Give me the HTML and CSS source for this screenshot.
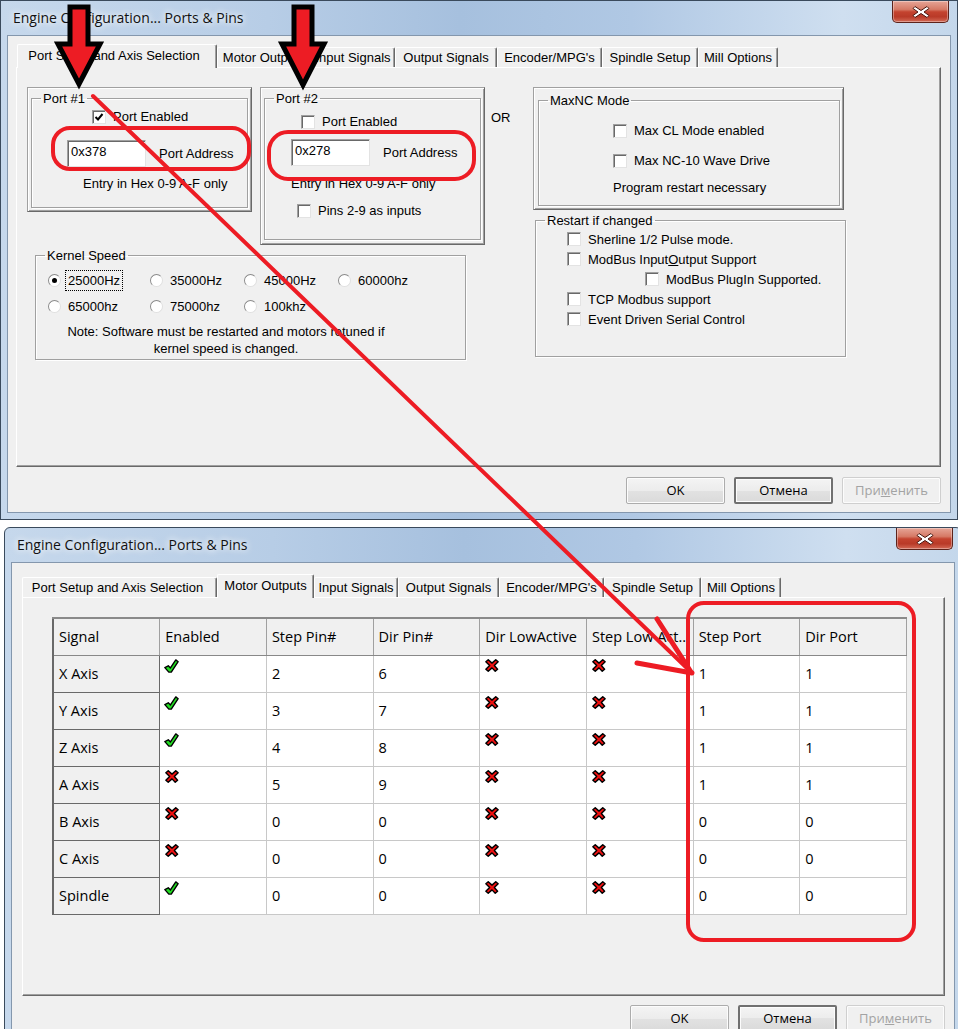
FILE: index.html
```html
<!DOCTYPE html>
<html>
<head>
<meta charset="utf-8">
<title>Engine Configuration</title>
<link rel="stylesheet" href="styles.css">
</head>
<body>
<svg class="defs" width="0" height="0" aria-hidden="true">
  <defs>
    <symbol id="ok" viewBox="0 0 14 13">
      <polygon points="0.8,8 4,6.3 6,8.3 11,0.8 13.2,2.5 6.8,12.2 4.5,12.2" fill="#22dd22" stroke="#000" stroke-width="1.3" stroke-linejoin="round"/>
    </symbol>
    <symbol id="no" viewBox="0 0 13 12">
      <polygon points="0.8,2.5 3,0.6 6.5,3.8 10,0.6 12.2,2.5 8.7,6 11.7,9.5 9.5,11.4 6.5,8.2 3,11.4 0.8,9.5 4.3,6" fill="#ee1111" stroke="#000" stroke-width="1.3" stroke-linejoin="round"/>
    </symbol>
    <symbol id="x" viewBox="0 0 18 14">
      <path d="M3 1.5 L9 5.5 L15 1.5 L17 3.5 L12 7 L17 10.5 L15 12.5 L9 8.5 L3 12.5 L1 10.5 L6 7 L1 3.5 Z" fill="#fff" stroke="#4a1810" stroke-width="1" stroke-linejoin="round"/>
    </symbol>
  </defs>
</svg>
<div class="desk">
  <section class="win win-a">
    <header class="titlebar">
      <span class="title">Engine Configuration... Ports &amp; Pins</span>
      <span class="close"><svg width="18" height="14"><use href="#x"/></svg></span>
    </header>
    <div class="client">
      <nav class="tabs tabs-a">
        <span class="tab sel t-port">Port Setup and Axis Selection</span>
        <span class="tab t-motor">Motor Outputs</span>
        <span class="tab t-input">Input Signals</span>
        <span class="tab t-output">Output Signals</span>
        <span class="tab t-enc">Encoder/MPG's</span>
        <span class="tab t-spin">Spindle Setup</span>
        <span class="tab t-mill">Mill Options</span>
      </nav>
      <div class="panel setup">
        <div class="col-left">
          <div class="ports">
            <div class="frame f-port1">
              <fieldset class="grp">
                <legend>Port #1</legend>
                <div class="ck p1-en"><span class="cb"><svg width="12" height="12" viewBox="0 0 12 12"><path d="M2.5 6 L5 8.5 L9.5 3" fill="none" stroke="#000" stroke-width="2"/></svg></span><span class="lbl">Port Enabled</span></div>
                <div class="addr p1-addr"><span class="edit">0x378</span><span class="addr-lbl">Port Address</span></div>
                <div class="hint p1-hint">Entry in Hex 0-9 A-F only</div>
              </fieldset>
            </div>
            <div class="frame f-port2">
              <fieldset class="grp">
                <legend>Port #2</legend>
                <div class="ck p2-en"><span class="cb"></span><span class="lbl">Port Enabled</span></div>
                <div class="addr p2-addr"><span class="edit">0x278</span><span class="addr-lbl">Port Address</span></div>
                <div class="hint p2-hint">Entry in Hex 0-9 A-F only</div>
                <div class="ck p2-pins"><span class="cb"></span><span class="lbl">Pins 2-9 as inputs</span></div>
              </fieldset>
            </div>
          </div>
          <fieldset class="grp kernel">
            <legend>Kernel Speed</legend>
            <div class="radios">
              <div class="ri"><span class="rb on"></span><span class="rl focus">25000Hz</span></div>
              <div class="ri"><span class="rb"></span><span class="rl">35000Hz</span></div>
              <div class="ri"><span class="rb"></span><span class="rl">45000Hz</span></div>
              <div class="ri"><span class="rb"></span><span class="rl">60000hz</span></div>
              <div class="ri"><span class="rb"></span><span class="rl">65000hz</span></div>
              <div class="ri"><span class="rb"></span><span class="rl">75000hz</span></div>
              <div class="ri"><span class="rb"></span><span class="rl">100khz</span></div>
            </div>
            <p class="note">Note: Software must be restarted and motors retuned if<br>kernel speed is changed.</p>
          </fieldset>
        </div>
        <div class="or">OR</div>
        <div class="col-right">
          <div class="frame f-maxnc">
            <fieldset class="grp">
              <legend>MaxNC Mode</legend>
              <div class="ck m-1"><span class="cb"></span><span class="lbl">Max CL Mode enabled</span></div>
              <div class="ck m-2"><span class="cb"></span><span class="lbl">Max NC-10 Wave Drive</span></div>
              <div class="hint m-hint">Program restart necessary</div>
            </fieldset>
          </div>
          <fieldset class="grp restart">
            <legend>Restart if changed</legend>
            <div class="ck rs"><span class="cb"></span><span class="lbl">Sherline 1/2 Pulse mode.</span></div>
            <div class="ck rs"><span class="cb"></span><span class="lbl">ModBus Input<u>O</u>utput Support</span></div>
            <div class="ck rs rs-sub"><span class="cb"></span><span class="lbl">ModBus PlugIn Supported.</span></div>
            <div class="ck rs"><span class="cb"></span><span class="lbl">TCP Modbus support</span></div>
            <div class="ck rs"><span class="cb"></span><span class="lbl">Event Driven Serial Control</span></div>
          </fieldset>
        </div>
      </div>
      <div class="btns">
        <span class="btn">OK</span>
        <span class="btn def">Отмена</span>
        <span class="btn dis">При<u>м</u>енить</span>
      </div>
    </div>
  </section>

  <section class="win win-b">
    <header class="titlebar">
      <span class="title">Engine Configuration... Ports &amp; Pins</span>
      <span class="close"><svg width="18" height="14"><use href="#x"/></svg></span>
    </header>
    <div class="client">
      <nav class="tabs tabs-b">
        <span class="tab t-port">Port Setup and Axis Selection</span>
        <span class="tab sel t-motor">Motor Outputs</span>
        <span class="tab t-input">Input Signals</span>
        <span class="tab t-output">Output Signals</span>
        <span class="tab t-enc">Encoder/MPG's</span>
        <span class="tab t-spin">Spindle Setup</span>
        <span class="tab t-mill">Mill Options</span>
      </nav>
      <div class="panel outputs">
        <table class="grid">
          <thead>
            <tr><th>Signal</th><th>Enabled</th><th>Step Pin#</th><th>Dir Pin#</th><th>Dir LowActive</th><th>Step Low Act..</th><th>Step Port</th><th>Dir Port</th></tr>
          </thead>
          <tbody>
            <tr><td class="rh">X Axis</td><td class="ic"><svg class="i-ok"><use href="#ok"/></svg></td><td>2</td><td>6</td><td class="ic"><svg class="i-no"><use href="#no"/></svg></td><td class="ic"><svg class="i-no"><use href="#no"/></svg></td><td>1</td><td>1</td></tr>
            <tr><td class="rh">Y Axis</td><td class="ic"><svg class="i-ok"><use href="#ok"/></svg></td><td>3</td><td>7</td><td class="ic"><svg class="i-no"><use href="#no"/></svg></td><td class="ic"><svg class="i-no"><use href="#no"/></svg></td><td>1</td><td>1</td></tr>
            <tr><td class="rh">Z Axis</td><td class="ic"><svg class="i-ok"><use href="#ok"/></svg></td><td>4</td><td>8</td><td class="ic"><svg class="i-no"><use href="#no"/></svg></td><td class="ic"><svg class="i-no"><use href="#no"/></svg></td><td>1</td><td>1</td></tr>
            <tr><td class="rh">A Axis</td><td class="ic"><svg class="i-no"><use href="#no"/></svg></td><td>5</td><td>9</td><td class="ic"><svg class="i-no"><use href="#no"/></svg></td><td class="ic"><svg class="i-no"><use href="#no"/></svg></td><td>1</td><td>1</td></tr>
            <tr><td class="rh">B Axis</td><td class="ic"><svg class="i-no"><use href="#no"/></svg></td><td>0</td><td>0</td><td class="ic"><svg class="i-no"><use href="#no"/></svg></td><td class="ic"><svg class="i-no"><use href="#no"/></svg></td><td>0</td><td>0</td></tr>
            <tr><td class="rh">C Axis</td><td class="ic"><svg class="i-no"><use href="#no"/></svg></td><td>0</td><td>0</td><td class="ic"><svg class="i-no"><use href="#no"/></svg></td><td class="ic"><svg class="i-no"><use href="#no"/></svg></td><td>0</td><td>0</td></tr>
            <tr><td class="rh">Spindle</td><td class="ic"><svg class="i-ok"><use href="#ok"/></svg></td><td>0</td><td>0</td><td class="ic"><svg class="i-no"><use href="#no"/></svg></td><td class="ic"><svg class="i-no"><use href="#no"/></svg></td><td>0</td><td>0</td></tr>
          </tbody>
        </table>
      </div>
      <div class="btns">
        <span class="btn">OK</span>
        <span class="btn def">Отмена</span>
        <span class="btn dis">При<u>м</u>енить</span>
      </div>
    </div>
  </section>

  <svg class="annot" width="958" height="1029" viewBox="0 0 958 1029">
    <g fill="none" stroke="#ed1c24" stroke-width="4" stroke-linecap="round">
      <rect x="53" y="128" width="196" height="41" rx="17"/>
      <rect x="269" y="132" width="205" height="47" rx="19"/>
      <rect x="688" y="603" width="226" height="337" rx="16"/>
      <path d="M93 96 L691 672"/>
      <path d="M657 619 L691 672 M637 663 L692 673" stroke-width="5"/>
    </g>
    <g fill="#ed1c24" stroke="#000" stroke-width="5" stroke-linejoin="miter">
      <polygon points="70,7 88,7 88,44 100,44 79,84 58,44 70,44"/>
      <polygon points="294,7 312,7 312,44 324,44 303,85 282,44 294,44"/>
    </g>
  </svg>
</div>
</body>
</html>
```

FILE: styles.css
```css
* { box-sizing: border-box; }
html, body { margin: 0; padding: 0; overflow: hidden; background: #fff; }
body {
  font-family: "Liberation Sans", Arial, sans-serif;
  font-size: 13px;
  line-height: 15px;
  color: #000;
}
.defs { position: absolute; width: 0; height: 0; overflow: hidden; }
.desk { position: relative; width: 958px; height: 1029px; overflow: hidden; }

/* ---------- window frame ---------- */
.win {
  display: flex;
  flex-direction: column;
  width: 958px;
  border: 1px solid #3a4a5c;
  border-radius: 6px 6px 0 0;
  padding: 0 6px 6px;
  background: linear-gradient(90deg, #c6d8ec 0%, #b7cde6 28%, #a6c0de 48%, #b0c8e4 66%, #cfdff0 88%, #c4d7eb 100%);
}
.win-a { height: 520px; border-radius: 0; }
.win-b { height: 540px; margin: 7px 0 0 4px; }
.titlebar {
  height: 34px;
  flex: none;
  display: flex;
  justify-content: space-between;
  align-items: flex-start;
}
.title {
  font-family: "Open Sans", "Noto Sans", sans-serif;
  font-size: 14px;
  line-height: 34px;
  padding-left: 6px;
  color: #111;
  text-shadow: 0 0 6px #fff, 0 0 10px rgba(255,255,255,.8);
}
.close {
  width: 57px;
  height: 22px;
  margin-right: 2px;
  border: 1px solid #5d231b;
  border-top: none;
  border-radius: 0 0 5px 5px;
  background: linear-gradient(#e6a597 0%, #d67a66 40%, #c4432f 52%, #b93a28 75%, #d36a56 100%);
  box-shadow: inset 0 0 0 1px rgba(255,255,255,.35);
  display: flex;
  align-items: center;
  justify-content: center;
}
.client {
  flex: 1;
  border: 1px solid #8497ad;
  background: #f0f0f0;
}
.win-a .client { padding: 8px 9px 0 8px; }
.win-b .client { padding: 11px 9px 0 10px; }

/* ---------- tabs ---------- */
.tabs { display: flex; align-items: flex-end; height: 23px; }
.tabs-a { padding-left: 1px; }
.tab {
  height: 20px;
  display: flex;
  align-items: center;
  justify-content: center;
  white-space: nowrap;
  background: #f0f0f0;
  border-top: 1px solid #fff;
  border-left: 1px solid #fff;
  border-right: 1px solid #696969;
  box-shadow: inset -1px 0 #a0a0a0;
  border-radius: 2px 2px 0 0;
}
.tab.sel {
  height: 24px;
  margin-bottom: -1px;
  padding-bottom: 3px;
  position: relative;
  z-index: 1;
}
.tabs-a .t-port { width: 200px; padding-right: 6px; }
.tabs-a .t-motor { width: 94px; }
.tabs-a .t-output { width: 102px; }
.tabs-a .t-spin { width: 96px; }
.tabs-b .t-port { width: 195px; padding-right: 4px; }
.tabs-b .t-motor { width: 97px; }
.tabs-b .t-output { width: 101px; }
.tabs-b .t-spin { width: 97px; }
.t-input { width: 84px; }
.t-enc { width: 105px; }
.t-mill { width: 80px; }

.panel {
  background: #f0f0f0;
  border: 1px solid;
  border-color: #fff #696969 #696969 #fff;
  box-shadow: inset -1px -1px #a0a0a0;
}
.win-a .panel { height: 400px; }
.win-b .panel { height: 399px; }

/* ---------- buttons ---------- */
.btns { display: flex; justify-content: flex-end; gap: 9px; margin-top: 10px; }
.win-b .btns { margin-top: 9px; }
.btn {
  width: 99px;
  height: 27px;
  display: flex;
  align-items: center;
  justify-content: center;
  font-family: "Open Sans", "Noto Sans", sans-serif;
  font-size: 13px;
  border: 1px solid #acacac;
  border-radius: 2px;
  background: linear-gradient(#f4f4f4, #ececec 50%, #e2e2e2 50%, #dadada);
  box-shadow: inset 0 0 0 1px #fcfcfc;
}
.btn.def { border: 2px solid #707070; }
.btn.dis { color: #a3a3a3; border-color: #cfcfcf; background: #f0f0f0; }

/* ---------- controls ---------- */
.frame {
  display: flex;
  flex-direction: column;
  border: 1px solid;
  border-color: #a0a0a0 #696969 #696969 #a0a0a0;
  box-shadow: inset 1px 1px #fff, inset -1px -1px #a0a0a0;
}
.grp {
  margin: 0;
  padding: 0;
  min-width: 0;
  border: 1px solid #a0a0a0;
  box-shadow: inset 1px 1px #fff, 1px 1px #fff;
}
.grp legend { padding: 0 2px; margin-left: 9px; line-height: 15px; }
.frame .grp { flex: 1; }

.ck { display: flex; align-items: center; height: 15px; }
.cb {
  flex: none;
  width: 14px;
  height: 14px;
  margin-right: 7px;
  background: #fff;
  border: 1px solid;
  border-color: #a0a0a0 #e3e3e3 #e3e3e3 #a0a0a0;
  box-shadow: inset 1px 1px #696969;
  display: flex;
  align-items: center;
  justify-content: center;
}
.cb svg { display: block; }
.addr { display: flex; align-items: center; }
.edit {
  width: 79px;
  height: 27px;
  padding: 3px 0 0 3px;
  background: #fff;
  border: 1px solid;
  border-color: #a0a0a0 #e3e3e3 #e3e3e3 #a0a0a0;
  box-shadow: inset 1px 1px #696969;
  margin-right: 13px;
}
.hint { line-height: 15px; }

.setup {
  display: grid;
  grid-template-columns: 458px 48px 313px;
  align-items: start;
  padding: 19px 0 0 10px;
}
.ports { display: flex; gap: 8px; align-items: flex-start; }
.f-port1 { width: 225px; height: 125px; padding: 3px 3px 3px 3px; }
.f-port2 { width: 225px; height: 158px; padding: 3px 3px 4px 3px; }
.p1-en { margin: 3px 0 0 60px; }
.p1-addr { margin: 16px 0 0 35px; }
.p1-hint { margin: 9px 0 0 51px; }
.p2-en { margin: 8px 0 0 36px; }
.p2-addr { margin: 10px 0 0 26px; }
.p2-hint { margin: 10px 0 0 26px; }
.p2-pins { margin: 12px 0 0 32px; }

.kernel { width: 431px; height: 112px; margin: 3px 0 0 8px; }
.radios {
  display: grid;
  grid-template-columns: 102px 94px 94px 94px;
  row-gap: 11px;
  margin: 10px 0 0 12px;
}
.ri { display: flex; align-items: center; height: 15px; }
.rb {
  flex: none;
  width: 13px;
  height: 13px;
  border-radius: 50%;
  background: #fff;
  border: 1px solid;
  border-color: #8a8a8a #e0e0e0 #e0e0e0 #8a8a8a;
  margin-right: 6px;
  display: flex;
  align-items: center;
  justify-content: center;
}
.rb.on::after { content: ""; width: 5px; height: 5px; border-radius: 50%; background: #000; }
.rl { padding: 1px; }
.rl.focus { outline: 1px dotted #000; outline-offset: 1px; }
.note { margin: 9px 0 0 10px; width: 360px; text-align: center; line-height: 17px; }

.or { padding: 23px 0 0 6px; }

.f-maxnc { width: 311px; height: 123px; padding: 5px 3px 3px 4px; }
.m-1 { margin: 15px 0 0 74px; }
.m-2 { margin: 15px 0 0 74px; }
.m-hint { margin: 12px 0 0 74px; }

.restart { width: 311px; height: 144px; margin: 3px 0 0 2px; }
.rs { height: 20px; padding-left: 31px; }
.rs:first-of-type { margin-top: 1px; }
.rs-sub { padding-left: 109px; }

/* ---------- motor outputs grid ---------- */
.outputs { padding: 19px 0 0 29px; }
.grid {
  border-collapse: collapse;
  table-layout: fixed;
  width: 855px;
  font-family: "Open Sans", "Noto Sans", sans-serif;
  font-size: 14.5px;
  border-left: 2px solid #696969;
  border-top: 2px solid #8a8a8a;
}
.grid th, .grid td {
  height: 37px;
  padding: 0 0 0 5px;
  text-align: left;
  font-weight: normal;
  vertical-align: middle;
  border: 1px solid #c8c8c8;
  background: #fff;
  white-space: nowrap;
  overflow: hidden;
}
.grid th { background: #f0f0f0; border-color: #a0a0a0; border-bottom-color: #888; }
.grid td.rh { background: #f0f0f0; border-color: #696969; }
.grid td.ic { vertical-align: top; padding: 3px 0 0 4px; }
.i-ok { width: 15px; height: 14px; display: block; }
.i-no { width: 14px; height: 13px; display: block; margin-left: 1px; }

/* ---------- annotations ---------- */
.annot { position: absolute; left: 0; top: 0; pointer-events: none; z-index: 5; }
```
